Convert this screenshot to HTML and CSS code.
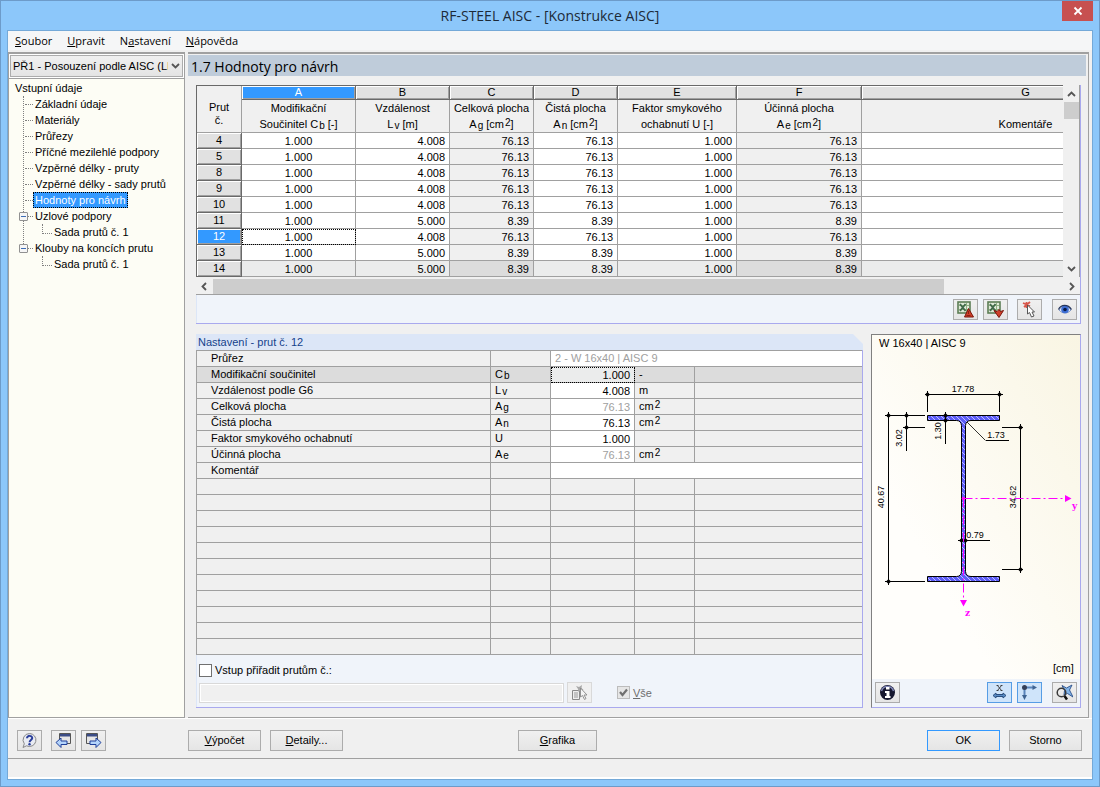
FILE: index.html
```html
<!DOCTYPE html>
<html lang="cs">
<head>
<meta charset="utf-8">
<title>RF-STEEL AISC - [Konstrukce AISC]</title>
<link rel="stylesheet" href="styles.css">
</head>
<body>
<div class="window">
  <header class="titlebar">
    <h1 class="title">RF-STEEL AISC - [Konstrukce AISC]</h1>
    <button class="close" aria-label="Zavřít"><svg width="10" height="10" viewBox="0 0 10 10"><path d="M1.500 1.500l7 7M8.500 1.500l-7 7" stroke="#fff" stroke-width="1.800"/></svg></button>
  </header>
  <div class="client">
    <nav class="menubar">
      <a href="#"><u>S</u>oubor</a>
      <a href="#"><u>U</u>pravit</a>
      <a href="#">N<u>a</u>stavení</a>
      <a href="#"><u>N</u>ápověda</a>
    </nav>

    <div class="workspace">
      <aside class="sidebar">
        <div class="case">
          <select class="case-select" aria-label="Případ">
            <option>PŘ1 - Posouzení podle AISC (LI</option>
          </select>
          <svg class="case-arrow" width="9" height="6" viewBox="0 0 9 6"><path d="M1 1l3.500 3.500L8 1" fill="none" stroke="#555" stroke-width="1.800"/></svg>
        </div>
        <div class="tree">
          <a class="root" href="#">Vstupní údaje</a>
          <ul class="branch">
            <li><a href="#">Základní údaje</a></li>
            <li><a href="#">Materiály</a></li>
            <li><a href="#">Průřezy</a></li>
            <li><a href="#">Příčné mezilehlé podpory</a></li>
            <li><a href="#">Vzpěrné délky - pruty</a></li>
            <li><a href="#">Vzpěrné délky - sady prutů</a></li>
            <li><a class="selected" href="#">Hodnoty pro návrh</a></li>
            <li><button class="toggle" aria-label="Sbalit Uzlové podpory"></button><a href="#">Uzlové podpory</a>
              <ul class="leaf"><li><a href="#">Sada prutů č. 1</a></li></ul>
            </li>
            <li><button class="toggle" aria-label="Sbalit Klouby na koncích prutu"></button><a href="#">Klouby na koncích prutu</a>
              <ul class="leaf"><li><a href="#">Sada prutů č. 1</a></li></ul>
            </li>
          </ul>
        </div>
      </aside>

      <main class="main">
        <h2 class="heading">1.7 Hodnoty pro návrh</h2>

        <section class="sheet">
          <div class="sheet-body">
            <div class="sheet-view">
              <table class="grid">
                <colgroup><col class="w-no"><col class="w-a"><col class="w-b"><col class="w-c"><col class="w-c"><col class="w-e"><col class="w-f"><col class="w-g"></colgroup>
                <thead>
                  <tr class="letters"><th class="corner" rowspan="2">Prut<br>č.</th><th class="active">A</th><th>B</th><th>C</th><th>D</th><th>E</th><th>F</th><th>G</th></tr>
                  <tr class="names"><th>Modifikační<br>Součinitel C<sub>b</sub> [-]</th><th>Vzdálenost<br>L<sub>v</sub> [m]</th><th>Celková plocha<br>A<sub>g</sub> [cm<sup>2</sup>]</th><th>Čistá plocha<br>A<sub>n</sub> [cm<sup>2</sup>]</th><th>Faktor smykového<br>ochabnutí U [-]</th><th>Účinná plocha<br>A<sub>e</sub> [cm<sup>2</sup>]</th><th>Komentáře</th></tr>
                </thead>
                <tbody>
                  <tr><th>4</th><td class="mid">1.000</td><td>4.008</td><td class="calc">76.13</td><td>76.13</td><td>1.000</td><td class="calc">76.13</td><td></td></tr>
                  <tr><th>5</th><td class="mid">1.000</td><td>4.008</td><td class="calc">76.13</td><td>76.13</td><td>1.000</td><td class="calc">76.13</td><td></td></tr>
                  <tr><th>8</th><td class="mid">1.000</td><td>4.008</td><td class="calc">76.13</td><td>76.13</td><td>1.000</td><td class="calc">76.13</td><td></td></tr>
                  <tr><th>9</th><td class="mid">1.000</td><td>4.008</td><td class="calc">76.13</td><td>76.13</td><td>1.000</td><td class="calc">76.13</td><td></td></tr>
                  <tr><th>10</th><td class="mid">1.000</td><td>4.008</td><td class="calc">76.13</td><td>76.13</td><td>1.000</td><td class="calc">76.13</td><td></td></tr>
                  <tr><th>11</th><td class="mid">1.000</td><td>5.000</td><td class="calc">8.39</td><td>8.39</td><td>1.000</td><td class="calc">8.39</td><td></td></tr>
                  <tr><th class="active">12</th><td class="mid focus">1.000</td><td>4.008</td><td class="calc">76.13</td><td>76.13</td><td>1.000</td><td class="calc">76.13</td><td></td></tr>
                  <tr><th>13</th><td class="mid">1.000</td><td>5.000</td><td class="calc">8.39</td><td>8.39</td><td>1.000</td><td class="calc">8.39</td><td></td></tr>
                  <tr class="shade"><th>14</th><td class="mid">1.000</td><td>5.000</td><td class="calc">8.39</td><td>8.39</td><td>1.000</td><td class="calc">8.39</td><td></td></tr>
                </tbody>
              </table>
            </div>
            <div class="vscroll">
              <svg width="9" height="6" viewBox="0 0 9 6"><path d="M1 5l3.500-3.500L8 5" fill="none" stroke="#555" stroke-width="1.800"/></svg>
              <div class="vthumb"></div>
              <svg width="9" height="6" viewBox="0 0 9 6"><path d="M1 1l3.500 3.500L8 1" fill="none" stroke="#555" stroke-width="1.800"/></svg>
            </div>
          </div>
          <div class="hscroll">
            <svg width="6" height="9" viewBox="0 0 6 9"><path d="M5 1L1.500 4.500 5 8" fill="none" stroke="#555" stroke-width="1.800"/></svg>
            <div class="htrack"><div class="hthumb"></div></div>
            <svg width="6" height="9" viewBox="0 0 6 9"><path d="M1 1l3.500 3.500L1 8" fill="none" stroke="#555" stroke-width="1.800"/></svg>
          </div>
          <div class="sheet-tools">
            <button class="tool" aria-label="Export do Excelu"><svg width="17" height="17" viewBox="0 0 17 17"><rect x="1" y="1" width="12" height="11" fill="#dfe9d8" stroke="#5c7d55" stroke-width="1.600"/><path d="M2 4.500h10M2 8.500h10M9.500 2v9.500" stroke="#8fb083"/><path d="M3 3l5.500 7M8.500 3L3 10" stroke="#41694a" stroke-width="1.800"/><path d="M11.500 7.500l5 8.500h-9z" fill="#d0402a" stroke="#7a150b"/><path d="M11.500 10v3M9.500 14.500h4" stroke="#8e2013"/></svg></button>
            <button class="tool" aria-label="Import z Excelu"><svg width="17" height="17" viewBox="0 0 17 17"><rect x="1" y="1" width="12" height="11" fill="#dfe9d8" stroke="#5c7d55" stroke-width="1.600"/><path d="M2 4.500h10M2 8.500h10M9.500 2v9.500" stroke="#8fb083"/><path d="M3 3l5.500 7M8.500 3L3 10" stroke="#41694a" stroke-width="1.800"/><path d="M7 9.500l3 1 2-2 1.500 2 3-1-4.500 7z" fill="#d0402a" stroke="#7a150b"/></svg></button>
            <button class="tool pick" aria-label="Vybrat prut"><svg width="17" height="17" viewBox="0 0 17 17"><path d="M2 2l7 3M9 1L3 6M5.500 1v6" stroke="#d8564a" stroke-width="1.800"/><path d="M6.500 4v9l2-1.500 2 4.500 2.500-1-2-4h2.500z" fill="#fff" stroke="#555"/></svg></button>
            <button class="tool view" aria-label="Zobrazit"><svg width="17" height="17" viewBox="0 0 17 17"><path d="M3 9c2.500-5 9-5 12 0-3 4-9 4-12 0z" fill="#dfe8f6" stroke="#7f97c4"/><circle cx="9" cy="8.500" r="3.800" fill="#3e6fd6"/><circle cx="9" cy="8.500" r="1.800" fill="#071a48"/><path d="M2.500 8.500C5 3 12 3 15.500 8.500" fill="none" stroke="#26365c" stroke-width="1.300"/></svg></button>
          </div>
        </section>

        <div class="lower">
          <section class="details">
            <h3 class="details-title">Nastavení - prut č. 12</h3>
            <div class="details-body">
            <table class="props">
              <colgroup><col class="p-name"><col class="p-sym"><col class="p-val"><col class="p-unit"><col></colgroup>
              <tbody>
                <tr><th>Průřez</th><td></td><td class="edit dim" colspan="3">2 - W 16x40 | AISC 9</td></tr>
                <tr class="current"><th>Modifikační součinitel</th><td>C<sub>b</sub></td><td class="num focus">1.000</td><td>-</td><td></td></tr>
                <tr><th>Vzdálenost podle G6</th><td>L<sub>v</sub></td><td class="num edit">4.008</td><td>m</td><td></td></tr>
                <tr><th>Celková plocha</th><td>A<sub>g</sub></td><td class="num edit dim">76.13</td><td>cm<sup>2</sup></td><td></td></tr>
                <tr><th>Čistá plocha</th><td>A<sub>n</sub></td><td class="num edit">76.13</td><td>cm<sup>2</sup></td><td></td></tr>
                <tr><th>Faktor smykového ochabnutí</th><td>U</td><td class="num edit">1.000</td><td></td><td></td></tr>
                <tr><th>Účinná plocha</th><td>A<sub>e</sub></td><td class="num edit dim">76.13</td><td>cm<sup>2</sup></td><td></td></tr>
                <tr><th>Komentář</th><td></td><td class="edit" colspan="3"></td></tr>
                <tr><th></th><td></td><td></td><td></td><td></td></tr>
                <tr><th></th><td></td><td></td><td></td><td></td></tr>
                <tr><th></th><td></td><td></td><td></td><td></td></tr>
                <tr><th></th><td></td><td></td><td></td><td></td></tr>
                <tr><th></th><td></td><td></td><td></td><td></td></tr>
                <tr><th></th><td></td><td></td><td></td><td></td></tr>
                <tr><th></th><td></td><td></td><td></td><td></td></tr>
                <tr><th></th><td></td><td></td><td></td><td></td></tr>
                <tr><th></th><td></td><td></td><td></td><td></td></tr>
                <tr><th></th><td></td><td></td><td></td><td></td></tr>
                <tr><th></th><td></td><td></td><td></td><td></td></tr>
              </tbody>
            </table>
            <div class="assign">
              <label class="check"><input type="checkbox">Vstup přiřadit prutům č.:</label>
              <div class="assign-row">
                <input class="members" type="text" aria-label="Čísla prutů" disabled>
                <button class="tool off" aria-label="Vybrat pruty" disabled><svg width="17" height="17" viewBox="0 0 17 17"><path d="M1.500 6.500h7v9h-7z" fill="#eee" stroke="#8a8a8a"/><path d="M3 9h4M3 11h4M3 13h4" stroke="#999"/><path d="M5 2l3 1 3-2-.5 3 2 2-3 0-2 2-.5-3z" fill="#a8a8a8"/><path d="M9.500 4v9l2-1.500 2 4 1.500-1-2-3.500h3z" fill="#f4f4f4" stroke="#888" stroke-width=".9"/></svg></button>
                <label class="check all"><input type="checkbox" checked disabled><span><u>V</u>še</span></label>
              </div>
            </div>
            </div>
          </section>

          <section class="picture">
            <svg class="drawing" viewBox="872 335 208 344" preserveAspectRatio="xMidYMin meet" role="img" aria-label="Průřez W 16x40">
              <defs>
                <pattern id="hatch" width="5" height="5" patternUnits="userSpaceOnUse">
                  <rect width="5" height="5" fill="#5c5cf8"/><path d="M-1 -1l7 7M-1 4l2 2M4 -1l2 2" stroke="#d8d8ff" stroke-width=".8"/>
                </pattern>
              </defs>
              <text class="caption" x="879" y="347">W 16x40 | AISC 9</text>
              <path d="M927.500 415.500h72v5h-28.500q-5 0-5.500 5v146q.5 5 5.500 5h28.500v5h-72v-5h29q4.500 0 5-5v-146q-.5-5-5-5h-29z" fill="url(#hatch)" stroke="#000"/>
              <g fill="none" stroke="#000" shape-rendering="crispEdges">
                <path d="M924.500 394.500h78M927.500 391v21M999.500 391v21"/>
                <path d="M885 415.500h40M885 581.500h40M888.500 412v173"/>
                <path d="M906.500 412v39M903 427.500h22M945.500 412v32"/>
                <path d="M1002 427.500h21M1002 569.500h21M1020.500 424v149"/>
                <path d="M958 540.500h32M985.500 440.500h23"/>
              </g>
              <path d="M967 422l18.500 18.500" stroke="#000" stroke-width=".8"/>
              <path d="M925 394.500l2.500-2.500 2.500 2.500-2.500 2.500zM997 394.500l2.500-2.500 2.500 2.500-2.500 2.500zM886 415.500l2.500-2.500 2.500 2.500-2.500 2.500zM886 581.500l2.500-2.500 2.500 2.500-2.500 2.500zM904 415.500l2.500-2.500 2.500 2.500-2.500 2.500zM904 427.500l2.500-2.500 2.500 2.500-2.500 2.500zM943 415.500l2.500-2.500 2.500 2.500-2.500 2.500zM943 420.500l2.500-2.500 2.500 2.500-2.500 2.500zM1018 427.500l2.500-2.500 2.500 2.500-2.500 2.500zM1018 569.500l2.500-2.500 2.500 2.500-2.500 2.500zM959 540.500l2.500-2.500 2.500 2.500-2.500 2.500zM963 540.500l2.500-2.500 2.500 2.500-2.500 2.500z"/>
              <g fill="none" stroke="#f0f" stroke-dasharray="9 3 2 3">
                <path d="M963.500 498.500h102"/><path d="M963.500 498.500v102"/>
              </g>
              <path d="M1065 495l6.500 3.500-6.500 3.500zM960 600h7l-3.500 6.500z" fill="#f0f"/>
              <circle cx="963.500" cy="498.500" r="1.800" fill="#f0f"/>
              <g class="dims">
                <text x="963" y="392">17.78</text>
                <text x="996" y="438">1.73</text>
                <text x="975" y="538">0.79</text>
                <text transform="translate(902 438) rotate(-90)">3.02</text>
                <text transform="translate(941 431) rotate(-90)">1.30</text>
                <text transform="translate(884 497) rotate(-90)">40.67</text>
                <text transform="translate(1016 497) rotate(-90)">34.62</text>
              </g>
              <text class="axis" x="1072" y="509">y</text>
              <text class="axis" x="965" y="616">z</text>
              <text class="caption" x="1053" y="672">[cm]</text>
            </svg>
            <div class="picture-tools">
              <button class="tool" aria-label="Informace"><svg width="17" height="17" viewBox="0 0 17 17"><circle cx="8.500" cy="8.500" r="7.500" fill="#15172f"/><path d="M2.500 7a6.300 6.300 0 0 1 12 0" fill="none" stroke="#7d84b4" stroke-width="1.500"/><path d="M7 3h3.500v2.500H7zM6 7h4.500v5h1v2H6v-2h1.500V9H6z" fill="#fff"/></svg></button>
              <button class="tool on dims-btn" aria-label="Kóty"><svg width="17" height="17" viewBox="0 0 17 17"><path d="M6.500 1.500l4 5M10.500 1.500l-4 5M5.500 1.500h2M9.500 1.500h2M5.500 6.500h2M9.500 6.500h2" stroke="#333" stroke-width=".9"/><path d="M2 11.500l3-2.500v1.500h7V9l3 2.500-3 2.500v-1.500H5V14z" fill="#5a8cc4" stroke="#2a4f80"/></svg></button>
              <button class="tool on" aria-label="Osy"><svg width="17" height="17" viewBox="0 0 17 17"><path d="M3.500 3.500h9M3.500 3.500V12" stroke="#5a84ba" stroke-width="2"/><path d="M11.500 1l4.500 2.500L11.500 6zM1 11h5l-2.500 5z" fill="#3f6391"/><circle cx="3.500" cy="3.500" r="2.500" fill="#333f58"/></svg></button>
              <button class="tool zoom" aria-label="Zobrazit vše"><svg width="17" height="17" viewBox="0 0 17 17"><path d="M6 1.500l4.500 2.500 5.500-3-2.500 5 3.500 7-5.500-3.500-3.500 1.500.5-4.500z" fill="#84b6ea" stroke="#2a4f8a" stroke-width=".9"/><circle cx="5.500" cy="8.500" r="4.300" fill="none" stroke="#3a3a3a" stroke-width="1.500"/><path d="M8.500 12l2.500 3.500" stroke="#111" stroke-width="2.500"/></svg></button>
            </div>
          </section>
        </div>
      </main>
    </div>

    <footer class="actions">
      <button class="tool" aria-label="Nápověda"><svg width="17" height="17" viewBox="0 0 17 17"><path d="M8.500 1.500a6.500 6.500 0 1 1-3 12.300L2 15.500l1.300-3.700A6.500 6.500 0 0 1 8.500 1.500z" fill="#e9ecf3" stroke="#888"/><path d="M6 6.200c0-3.200 5.500-3 5.200 0-.2 1.800-2.600 1.800-2.600 4" fill="none" stroke="#2b3f9a" stroke-width="2"/><circle cx="8.500" cy="12.300" r="1.200" fill="#2b3f9a"/></svg></button>
      <button class="tool" aria-label="Předchozí"><svg width="17" height="17" viewBox="0 0 17 17"><path d="M4.500 1.500h11v10h-11z" fill="#e6e6e6" stroke="#555"/><path d="M5 2h10v2.500H5z" fill="#3c4d86"/><path d="M1 10.500L6 6v3h6v3.500H6v3z" fill="#b4d4fb" stroke="#1f3f9a"/></svg></button>
      <button class="tool next" aria-label="Další"><svg width="17" height="17" viewBox="0 0 17 17"><path d="M1.500 1.500h11v10h-11z" fill="#e6e6e6" stroke="#555"/><path d="M2 2h10v2.500H2z" fill="#3c4d86"/><path d="M16 10.500L11 6v3H5v3.500h6v3z" fill="#b4d4fb" stroke="#1f3f9a"/></svg></button>
      <button class="push calc-btn"><span><u>V</u>ýpočet</span></button>
      <button class="push"><span><u>D</u>etaily...</span></button>
      <button class="push graph-btn"><span><u>G</u>rafika</span></button>
      <button class="push default">OK</button>
      <button class="push">Storno</button>
    </footer>
    <div class="statusbar"></div>
  </div>
</div>
</body>
</html>
```
FILE: styles.css
```css
* { box-sizing: border-box; }

body {
  margin: 0;
  font: 11px/16px "Liberation Sans", Arial, sans-serif;
  color: #000;
}

a { color: inherit; text-decoration: none; }
button, input, select { font: inherit; color: inherit; margin: 0; padding: 0; }
h1, h2, h3, ul { margin: 0; padding: 0; font-weight: normal; }
ul { list-style: none; }
svg { display: block; }
sub, sup { font-size: 10px; line-height: 0; margin-left: 1px; }
sub { vertical-align: -1px; }
sup { vertical-align: 2px; }

.window {
  min-height: 100vh;
  display: flex;
  flex-direction: column;
  padding: 0 6px 6px;
  border: 1px solid #6d9bc9;
  background: #8cc7fa;
}

.titlebar {
  position: relative;
  display: flex;
  align-items: center;
  justify-content: center;
  height: 29px;
}
.title { font: 14px/20px "Open Sans", "Noto Sans", sans-serif; color: #1c2a38; }
.close {
  position: absolute;
  top: 0;
  right: 0;
  display: flex;
  align-items: center;
  justify-content: center;
  width: 31px;
  height: 20px;
  border: 0;
  background: #c75050;
}

.client {
  flex: 1;
  display: flex;
  flex-direction: column;
  border: 1px solid #74a9d8;
  background: #f0f0f0;
}

.menubar {
  display: flex;
  gap: 15px;
  height: 19px;
  padding: 0 7px;
  background: #f5f6f7;
  font: 11px/19px "Open Sans", "Noto Sans", sans-serif;
}

.workspace { flex: 1; display: flex; gap: 3px; padding-top: 2px; }

.sidebar {
  flex: none;
  width: 177px;
  display: flex;
  flex-direction: column;
  border: 1px solid #a0a0a0;
  border-top-width: 2px;
}
.case { position: relative; padding: 1px; background: #fff; }
.case-select {
  display: block;
  appearance: none;
  width: 100%;
  height: 22px;
  padding: 0 14px 0 2px;
  border: 1px solid #acacac;
  border-radius: 0;
  background: linear-gradient(#f0f0f0, #e4e4e4);
}
.case-arrow { position: absolute; right: 4px; top: 9px; }

.tree {
  flex: 1;
  border-top: 1px solid #a0a0a0;
  padding: 1px 0 0 6px;
  background: #fdfdf5;
}
.tree a { white-space: nowrap; }
.tree .root { display: block; }
.branch { position: relative; padding-left: 20px; }
.branch::before {
  content: "";
  position: absolute;
  left: 8px;
  top: 0;
  bottom: 24px;
  border-left: 1px dotted #808080;
}
.branch li { position: relative; }
.branch > li::before {
  content: "";
  position: absolute;
  left: -10px;
  top: 8px;
  width: 8px;
  border-top: 1px dotted #808080;
}
.branch .selected {
  display: inline-block;
  height: 16px;
  line-height: 14px;
  margin-left: -2px;
  padding: 0 1px;
  border: 1px dotted #000;
  background: #3399ff;
  color: #fff;
  vertical-align: top;
}
.toggle {
  position: absolute;
  left: -16px;
  top: 4px;
  width: 9px;
  height: 9px;
  border: 1px solid #919191;
  border-radius: 1px;
  background: linear-gradient(#3d6db5, #3d6db5) center / 5px 1px no-repeat #f6f6f6;
}
.leaf { padding-left: 19px; }
.leaf li::before {
  content: "";
  position: absolute;
  left: -12px;
  top: 0;
  width: 9px;
  height: 9px;
  border: 1px dotted #808080;
  border-width: 0 0 1px 1px;
}

.main {
  flex: 1;
  min-width: 0;
  display: flex;
  flex-direction: column;
  margin-right: 3px;
  padding: 1px 2px 9px 0;
  border: solid #a0a0a0;
  border-width: 2px 1px 1px 0;
}
.heading {
  height: 21px;
  padding-left: 3px;
  background: #bfccda;
  font: 14px/24px "Open Sans", "Noto Sans", sans-serif;
}

.sheet {
  margin: 9px 5px 0 8px;
  border: solid #a9a9ee;
  border-width: 0 1px 1px 0;
}
.sheet-body { display: flex; }
.sheet-view {
  flex: 1;
  min-width: 0;
  overflow: hidden;
  border: solid #696969;
  border-width: 1px 0 0 1px;
}

.grid {
  width: 100%;
  min-width: 993px;
  table-layout: fixed;
  border-spacing: 0;
  background: #fff;
}
.w-no { width: 45px; }
.w-a { width: 114px; }
.w-b { width: 94px; }
.w-c { width: 84px; }
.w-e { width: 119px; }
.w-f { width: 125px; }
.grid th, .grid td {
  height: 16px;
  padding: 0 4px;
  border: solid #a0a0a0;
  border-width: 0 1px 1px 0;
  font-weight: normal;
  line-height: 15px;
  text-align: right;
  white-space: nowrap;
}
.grid td { padding-top: 2px; line-height: 13px; }
.grid th { text-align: center; background: #f0f0f0; }
.grid .letters th { height: 14px; line-height: 13px; }
.grid .letters th:not(.corner), .grid tbody th {
  border-color: #696969;
  background: #e1e1e1;
  box-shadow: inset 1px 1px #fff, inset -1px -1px #a0a0a0;
}
.grid .letters th.active, .grid tbody th.active {
  background: #3399ff;
  color: #fff;
}
.grid .letters .corner { padding-top: 10px; }
.grid .names th { height: 33px; line-height: 16px; padding: 0; vertical-align: bottom; }
.grid .mid { text-align: center; }
.grid .calc { background: #f0f0f0; }
.grid .shade td { background: #ebecec; }
.grid .shade .calc { background: #dcdcdc; }
.focus { outline: 1px dotted #000; outline-offset: -1px; }

.vscroll {
  display: flex;
  flex-direction: column;
  align-items: center;
  width: 17px;
  padding: 6px 0 5px;
  border-right: 1px solid #a0a0a0;
  background: #f0f0f0;
}
.vthumb { width: 15px; height: 17px; margin: 5px 0 auto; background: #cdcdcd; }
.hscroll {
  display: flex;
  align-items: center;
  height: 17px;
  margin-top: 1px;
  padding: 0 5px;
  border-bottom: 1px solid #a0a0a0;
  background: #f0f0f0;
}
.htrack { flex: 1; margin: 0 6px; }
.hthumb { width: 86%; height: 15px; background: #cdcdcd; }

.sheet-tools {
  display: flex;
  justify-content: flex-end;
  gap: 5px;
  padding: 4px 3px 3px;
  border-left: 1px solid #dce6f7;
  background: #f0f4fa;
}
.tool {
  flex: none;
  display: flex;
  align-items: center;
  justify-content: center;
  width: 25px;
  height: 21px;
  border: 1px solid #acacac;
  background: linear-gradient(#f0f0f0, #e5e5e5);
}
.pick { margin-left: 4px; }
.view { margin-left: 5px; }
.tool.on { border-color: #569de5; background: #cfe4fa; }
.tool.off { border-color: #d9d9d9; background: #f0f0f0; }

.lower { flex: 1; display: flex; gap: 8px; margin: 10px 5px 0 8px; }

.details { flex: 1; min-width: 0; display: flex; flex-direction: column; }
.details-title {
  height: 16px;
  padding-left: 2px;
  background: #dce6f7;
  clip-path: polygon(0 0, calc(100% - 10px) 0, 100% 10px, 100% 100%, 0 100%);
  color: #15428b;
  font-size: 11px;
}
.details-body {
  flex: 1;
  display: flex;
  flex-direction: column;
  border: solid #a9a9ee;
  border-width: 0 1px 1px 0;
}
.props {
  width: 100%;
  table-layout: fixed;
  border: solid #a0a0a0;
  border-width: 1px 0 0 1px;
  border-spacing: 0;
}
.p-name { width: 294px; }
.p-sym { width: 60px; }
.p-val { width: 84px; }
.p-unit { width: 60px; }
.props th, .props td {
  height: 16px;
  padding: 0 4px;
  border: solid #a0a0a0;
  border-width: 0 1px 1px 0;
  font-weight: normal;
  line-height: 15px;
  text-align: left;
}
.props th { padding-left: 14px; }
.props td:last-child { border-right-width: 0; }
.props td.num { padding-top: 2px; line-height: 13px; text-align: right; }
.props .edit { background: #fff; }
.props .dim { color: #a0a0a0; }
.props .current { background: #dcdcdc; }
.props .current .focus { background: #ebecec; }

.assign {
  flex: 1;
  border: solid #dce6f7;
  border-width: 0 0 0 1px;
  padding: 7px 2px 4px;
  background: #f0f4fa;
}
.check { display: flex; align-items: center; gap: 3px; }
.check input {
  appearance: none;
  width: 13px;
  height: 13px;
  border: 1px solid #707070;
  background: #fff;
}
.check input:disabled {
  border-color: #bcbcbc;
  background: #e6e6e6 url("data:image/svg+xml,%3Csvg xmlns='http://www.w3.org/2000/svg' viewBox='0 0 11 11'%3E%3Cpath d='M2 5l2.500 3L9 2.500' fill='none' stroke='%23707070' stroke-width='2.200'/%3E%3C/svg%3E") center / 11px 11px no-repeat;
}
.assign-row { display: flex; align-items: center; gap: 3px; margin-top: 4px; }
.members {
  flex: 1;
  min-width: 0;
  max-width: 365px;
  height: 20px;
  border: 1px solid #d9d9d9;
  background: #f0f0f0;
  box-shadow: inset 0 0 0 1px #fff;
}
.all { margin-left: 22px; color: #6d6d6d; }

.picture {
  flex: none;
  width: 210px;
  display: flex;
  flex-direction: column;
  border: 1px solid #a9a9ee;
  border-top-color: #808080;
  border-left-color: #808080;
}
.drawing {
  flex: 1;
  width: 100%;
  min-height: 0;
  background: linear-gradient(60deg, #fffefb 30%, #f9f5e3);
}
.drawing text { font-family: "Liberation Sans", Arial, sans-serif; }
.drawing .caption { font-size: 11px; }
.drawing .dims text { font-size: 9px; text-anchor: middle; }
.drawing .axis { font: bold 9px "DejaVu Serif", serif; fill: #f0f; }
.picture-tools { display: flex; gap: 5px; padding: 3px 3px 4px; background: #f0f4fa; }
.dims-btn { margin-left: auto; }
.zoom { margin-left: 5px; }

.actions {
  display: flex;
  align-items: center;
  gap: 9px;
  height: 40px;
  padding: 3px 10px 0 9px;
  border-top: 1px solid #fff;
}
.next { margin-left: -4px; }
.push {
  display: flex;
  align-items: center;
  justify-content: center;
  width: 73px;
  height: 21px;
  border: 1px solid #acacac;
  background: linear-gradient(#f0f0f0, #e5e5e5);
}
.calc-btn { margin-left: 73px; }
.graph-btn { width: 79px; margin: 0 auto 0 166px; }
.push.default { border-color: #3399ff; }

.statusbar {
  height: 21px;
  border-top: 1px solid #a0a0a0;
  border-bottom: 2px solid #fff;
}
```
